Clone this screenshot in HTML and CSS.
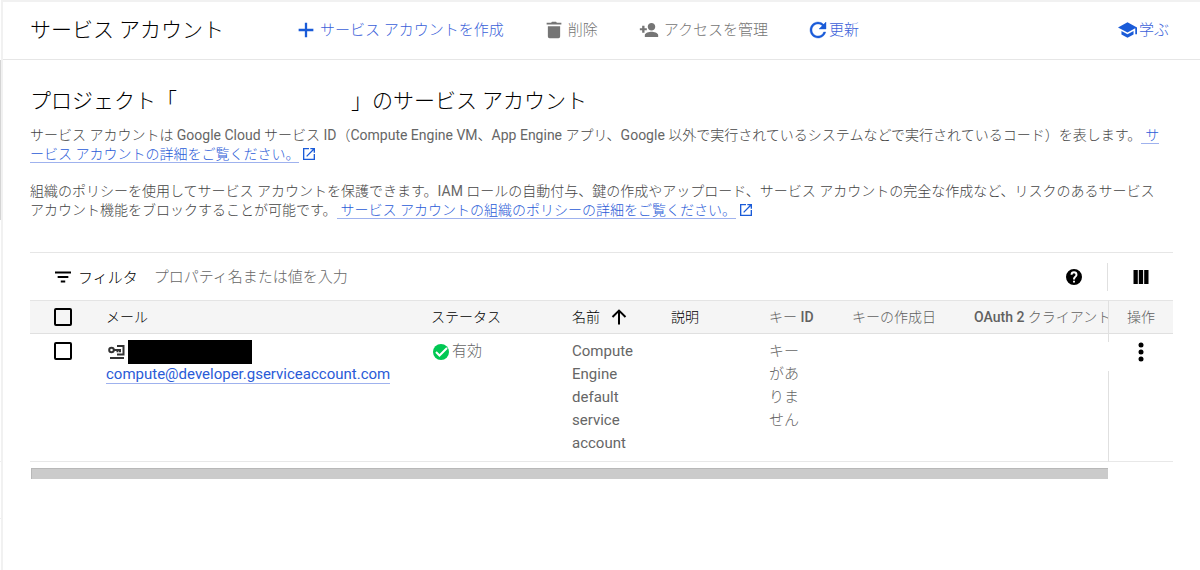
FILE: index.html
```html
<!DOCTYPE html>
<html lang="ja">
<head>
<meta charset="utf-8">
<meta name="viewport" content="width=device-width, initial-scale=1">
<title>サービス アカウント</title>
<link rel="stylesheet" href="styles.css">
</head>
<body>
<div class="shell">
  <div class="rail"><span class="rail-active"></span><span class="rail-gap"></span><span class="rail-item"></span></div>
  <div class="page">
    <header class="topbar">
      <h1 class="title">サービス アカウント</h1>
      <div class="actions">
        <button type="button" class="action primary">
          <svg class="icon plus" viewBox="1 1 22 22"><path d="M10.600 3h2.800v7.600H21v2.800h-7.600V21h-2.800v-7.600H3v-2.800h7.600z"/></svg>サービス アカウントを作成</button>
        <button type="button" class="action" disabled>
          <svg class="icon" viewBox="1 1 22 22"><path d="M4.500 7.500h15V20a2 2 0 0 1-2 2h-11a2 2 0 0 1-2-2zM21 3.200h-5.500L14.500 2h-5L8.500 3.200H3v2.200h18z"/></svg>削除</button>
        <button type="button" class="action" disabled>
          <svg class="icon wide" viewBox="0 2 24 20"><path d="M15 12.500c2.600 0 4.500-2 4.500-4.500s-2-4.500-4.500-4.500-4.500 2-4.500 4.500 2 4.500 4.500 4.500zm-8.400-2.700V7H3.800v2.800H1v2.600h2.800v2.800h2.800v-2.800h2.800V9.800zM15 14c-2.670 0-8 1.340-8 4v2.500h16V18c0-2.660-5.330-4-8-4z"/></svg>アクセスを管理</button>
        <button type="button" class="action primary tight">
          <svg class="icon" viewBox="3 3 18 18"><path class="bold" d="M17.650 6.350A7.958 7.958 0 0 0 12 4c-4.420 0-7.990 3.580-7.990 8s3.570 8 7.990 8c3.730 0 6.840-2.550 7.730-6h-2.080A5.990 5.990 0 0 1 12 18c-3.310 0-6-2.690-6-6s2.690-6 6-6c1.660 0 3.140.69 4.220 1.780L13 11h7V4z"/></svg>更新</button>
      </div>
      <a class="action primary tight learn" href="#learn">
        <svg class="icon hat" viewBox="1 2 22 20"><path d="M5 13.180v4L12 21l7-3.820v-4L12 17zM12 3 1 9l11 6 9-4.910V17h2V9z"/></svg>学ぶ</a>
    </header>
    <main class="content">
      <h2 class="heading">プロジェクト「<span class="redacted-name"></span>」のサービス アカウント</h2>
      <p class="note">サービス アカウントは <span class="latin">Google Cloud</span> サービス <span class="latin">ID</span>（<span class="latin">Compute Engine VM</span>、<span class="latin">App Engine</span> アプリ、<span class="latin">Google</span> 以外で実行されているシステムなどで実行されているコード）を表します。<a class="link lead" href="#about">サービス アカウントの詳細をご覧ください。</a><svg class="external" viewBox="3 3 18 18"><path d="M19 19H5V5h7V3H3v18h18v-9h-2zM14 3v2h3.590l-9.830 9.830 1.410 1.410L19 6.410V10h2V3z"/></svg></p>
      <p class="note">組織のポリシーを使用してサービス アカウントを保護できます。<span class="latin">IAM</span> ロールの自動付与、鍵の作成やアップロード、サービス アカウントの完全な作成など、リスクのあるサービス アカウント機能をブロックすることが可能です。<a class="link lead" href="#policy">サービス アカウントの組織のポリシーの詳細をご覧ください。</a><svg class="external" viewBox="3 3 18 18"><path d="M19 19H5V5h7V3H3v18h18v-9h-2zM14 3v2h3.590l-9.830 9.830 1.410 1.410L19 6.410V10h2V3z"/></svg></p>
      <section class="panel">
        <div class="filter">
          <label class="filter-label" for="filter"><svg class="icon filter-icon" viewBox="3 3 18 18"><path d="M9.500 18.200h5v-2.400h-5zM3 5.800v2.400h18V5.800zm3 7.400h12v-2.400H6z"/></svg>フィルタ</label>
          <input class="filter-input" id="filter" type="text" placeholder="プロパティ名または値を入力">
          <button type="button" class="icon-button" aria-label="ヘルプ"><svg class="icon" viewBox="2 2 20 20"><path d="M12 2a10 10 0 1 0 0 20 10 10 0 0 0 0-20zm1.200 17h-2.400v-2.400h2.400zm2.300-7.600-.9.900c-.8.800-1.300 1.400-1.300 2.900h-2.500v-.6c0-1.100.5-2.100 1.200-2.800l1.300-1.300c.4-.3.600-.8.600-1.300a1.900 1.900 0 0 0-3.800 0H7.700a4.300 4.300 0 0 1 8.600 0c0 .9-.3 1.700-.8 2.200z"/></svg></button>
          <div class="columns"><button type="button" class="icon-button" aria-label="表示する列"><svg class="icon" viewBox="0 0 16 16"><path d="M.5 1h4.300v14H.5zM5.800 1h4.300v14H5.800zM11.200 1h4.300v14h-4.300z"/></svg></button></div>
        </div>
        <table class="accounts">
          <colgroup><col class="c-check"><col class="c-mail"><col class="c-status"><col class="c-name"><col class="c-desc"><col class="c-key"><col class="c-date"><col class="c-oauth"><col class="c-menu"></colgroup>
          <thead>
            <tr>
              <th class="pick"><input class="check" type="checkbox" aria-label="すべて選択"></th>
              <th>メール</th>
              <th>ステータス</th>
              <th>名前<svg class="sort" viewBox="0 0 16 16"><path d="M8 15.500V2M1.500 8 8 1.600 14.500 8"/></svg></th>
              <th>説明</th>
              <th class="muted">キー <b>ID</b></th>
              <th class="muted">キーの作成日</th>
              <th class="muted"><b>OAuth 2</b> クライアント</th>
              <th class="muted menu-head">操作</th>
            </tr>
          </thead>
          <tbody>
            <tr>
              <td class="pick"><input class="check" type="checkbox" aria-label="行を選択"></td>
              <td><div class="account"><svg class="key" viewBox="0 0 17 16"><path d="M6 6h7M9.500 6v2.300M12 6v2.300M9 2h6.500v8.500H9M2 14h14"/><circle cx="3.500" cy="6" r="2.300"/></svg><span class="mask"></span></div><a class="link" href="#account">compute@developer.gserviceaccount.com</a></td>
              <td><div class="status"><svg class="icon ok" viewBox="0 0 16 16"><circle cx="8" cy="8" r="8"/><path d="m3 8 3.500 3.500L14 4"/></svg>有効</div></td>
              <td class="name">Compute Engine default service account</td>
              <td></td>
              <td class="key-id">キーがありません</td>
              <td></td>
              <td></td>
              <td class="menu-cell"><button type="button" class="menu" aria-label="操作メニュー"><svg class="dots" viewBox="0 0 6 20"><circle cx="3" cy="3" r="2.500"/><circle cx="3" cy="10" r="2.500"/><circle cx="3" cy="17" r="2.500"/></svg></button></td>
            </tr>
          </tbody>
        </table>
        <div class="scrollbar"></div>
      </section>
    </main>
  </div>
</div>
</body>
</html>
```
FILE: styles.css
```css
* { box-sizing: border-box; }
body {
  margin: 0;
  background: #fff;
  color: #444;
  font-family: Roboto, "Noto Sans CJK JP", sans-serif;
  font-size: 14px;
  font-weight: 400;
}
button { font: inherit; background: none; border: 0; padding: 0; cursor: pointer; }
.icon { width: 16px; height: 16px; fill: currentColor; flex: none; }

.shell { display: flex; min-height: 100vh; }
.rail {
  display: flex;
  flex-direction: column;
  width: 3px;
  padding-top: 60px;
  border-right: 2px solid #f1f1f1;
}
.rail-active { height: 160px; background: #d4d4d4; }
.rail-gap { height: 242px; border-bottom: 1px solid #eee; }
.rail-item { height: 57px; border-bottom: 1px solid #eee; }
.page { flex: 1; min-width: 0; border-top: 2px solid #f1f1f1; }

.topbar {
  display: flex;
  align-items: center;
  height: 58px;
  padding: 0 31px 2px 27px;
  border-bottom: 1px solid #e6e6e6;
}
.title, .heading { margin: 0; color: #000; font-size: 21px; font-weight: 300; line-height: 28px; }
.title { width: 267px; }
.actions { display: flex; gap: 41px; }
.action {
  display: inline-flex;
  align-items: center;
  gap: 5px;
  color: #757575;
  font-size: 15px;
  font-weight: 300;
  line-height: 20px;
  text-decoration: none;
  white-space: nowrap;
}
.action .icon { width: 18px; height: 18px; }
.action.primary { color: #3b5fd9; }
.action.primary .icon { fill: #1a5bd8; }
.action.tight { gap: 2px; }
.action .hat { width: 19px; }
.action .wide { width: 20px; }
.bold { stroke: #1a5bd8; stroke-width: .4; }
.learn { margin-left: auto; }

.content { padding: 27px 27px 0; }
.redacted-name { display: inline-block; width: 174px; }
.note { margin: 11px 5px 0 0; font-weight: 300; line-height: 19px; }
.note + .note { margin-top: 18px; }
.latin { color: #666; font-weight: 400; }
.link { color: #2a5bd7; text-decoration: none; border-bottom: 1px solid #9fb2ee; }
.lead { padding-left: 4px; }
.external { width: 12px; height: 12px; margin-left: 4px; fill: #1a5bd8; vertical-align: -1px; }

.panel { margin-top: 32px; border-top: 1px solid #e6e6e6; }
.filter { display: flex; align-items: center; height: 47px; padding-left: 25px; color: #000; font-size: 15px; }
.filter-label { display: flex; align-items: center; gap: 7px; font-weight: 300; }
.filter-input {
  flex: 1;
  min-width: 0;
  margin-left: 16px;
  padding: 0;
  border: 0;
  outline: 0;
  font: inherit;
  font-weight: 300;
}
.filter-input::placeholder { color: #666; opacity: 1; }
.icon-button { display: flex; color: #000; }
.columns {
  display: flex;
  align-items: center;
  justify-content: center;
  width: 66px;
  height: 28px;
  margin-left: 25px;
  border-left: 1px solid #e0e0e0;
}

.accounts { width: 100%; table-layout: fixed; border-collapse: separate; border-spacing: 0; }
.c-check { width: 76px; }
.c-mail { width: 325px; }
.c-status { width: 141px; }
.c-name { width: 99px; }
.c-desc { width: 98px; }
.c-key { width: 83px; }
.c-date { width: 122px; }
.c-menu { width: 65px; }
.accounts th {
  height: 34px;
  padding: 0 0 2px;
  overflow: hidden;
  background: #f5f5f5;
  border-top: 1px solid #e4e4e4;
  border-bottom: 1px solid #e0e0e0;
  color: #000;
  font-weight: 300;
  text-align: left;
  white-space: nowrap;
}
.accounts .muted { color: #616161; }
.muted b { color: #616161; font-weight: 500; }
.accounts .menu-head { border-left: 1px solid #e0e0e0; text-align: center; }
.accounts td {
  height: 128px;
  padding: 6px 0;
  border-bottom: 1px solid #e8e8e8;
  color: #666;
  font-size: 15px;
  line-height: 23px;
  vertical-align: top;
}
.accounts .pick { padding-left: 24px; }
.accounts th.pick { padding-bottom: 0; }
.check {
  display: block;
  appearance: none;
  width: 18px;
  height: 18px;
  margin: 0;
  border: 2px solid #000;
  border-radius: 2px;
}
td .check { margin-top: 2px; }
.sort { width: 16px; height: 16px; margin-left: 11px; fill: none; stroke: #000; stroke-width: 2; vertical-align: -3px; }
.account { display: flex; align-items: center; gap: 3px; height: 23px; padding-left: 2px; }
.key { width: 17px; height: 16px; fill: none; stroke: #333; stroke-width: 2; }
.mask { width: 124px; height: 24px; background: #000; }
.status { display: flex; align-items: center; gap: 3px; padding-left: 2px; font-weight: 300; }
.ok { fill: #00c853; }
.ok path { fill: none; stroke: #fff; stroke-width: 2; }
.accounts .name { padding-right: 30px; }
.accounts .key-id { padding-right: 50px; font-weight: 300; }
.accounts .menu-cell { padding-top: 8px; border-left: 1px solid #e0e0e0; }
.menu { display: flex; align-items: flex-start; justify-content: center; width: 65px; height: 29px; margin-left: -1px; background: #fff; }
.dots { width: 6px; height: 20px; fill: #000; }
.scrollbar { height: 11px; margin: 6px 65px 0 1px; background: #cbcbcb; border-top: 1px solid #b8b8b8; border-left: 1px solid #b8b8b8; }
```
